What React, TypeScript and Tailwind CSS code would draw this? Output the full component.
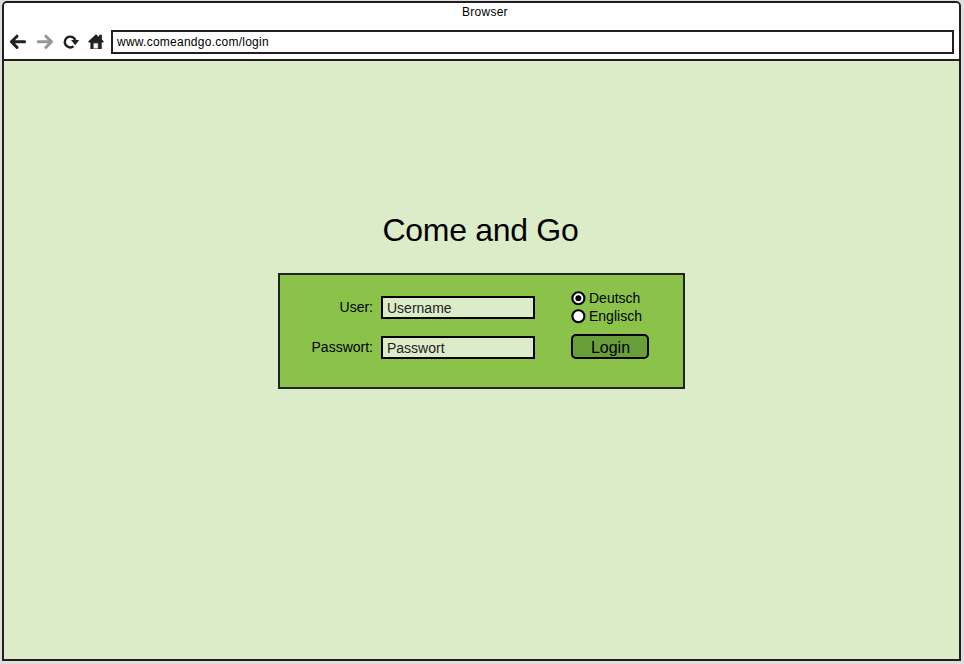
import React, { useState } from "react";

const toolbarIcons = (
  <svg width="100" height="20" viewBox="0 0 100 20" className="block shrink-0" fill="none">
    <path d="M20.6 9.8H8.2M13 4.2L7.4 9.8l5.6 5.6" stroke="#231f20" strokeWidth="3" strokeLinecap="round" strokeLinejoin="round" />
    <path d="M34.3 9.8h12.4M41.9 4.2l5.6 5.6-5.6 5.6" stroke="#979797" strokeWidth="3" strokeLinecap="round" strokeLinejoin="round" />
    <path d="M69.5 14.3A5.4 5.4 0 1 1 71.5 8.9" stroke="#231f20" strokeWidth="2.4" />
    <path d="M67 7.9h8.2l-4 5.3z" fill="#231f20" />
    <path
      d="M92 2.2l3.1 2.8V2.7h2.8v4.7l1.7 1.9v1.2h-1.9v6.4H86.4v-6.4h-2V9.3z"
      fill="#231f20"
    />
    <path d="M89.6 11.2h4.4v5.2h-4.4z" stroke="#85878a" strokeWidth=".8" fill="#fff" />
  </svg>
);

function Radio({ label, checked, onSelect }: { label: string; checked: boolean; onSelect: () => void }) {
  return (
    <button type="button" role="radio" aria-checked={checked} onClick={onSelect} className="flex h-[18px] items-center">
      <svg width="15" height="15" viewBox="0 0 15 15" className="mr-[3px] block shrink-0">
        <circle cx="7.4" cy="7.2" r="6" fill="#fff" stroke="#000" strokeWidth="2.1" />
        {checked && <circle cx="7.4" cy="7.2" r="3" fill="#000" />}
      </svg>
      <span className="whitespace-nowrap text-[14px] leading-[18px]">{label}</span>
    </button>
  );
}

function Field({ label, value }: { label: string; value: string }) {
  return (
    <div className="flex h-[23px]">
      <label className="mr-[8px] w-[93px] text-right text-[14px] leading-[23px]">{label}</label>
      <div className="w-[154px] border-2 border-black bg-[#ddecc8] pl-[4px] text-[14px] leading-[21px] text-[#222]">
        {value}
      </div>
    </div>
  );
}

export default function App() {
  const [language, setLanguage] = useState("Deutsch");
  return (
    <div className="h-[664px] w-[964px] overflow-hidden bg-[#dedede] pl-[2px] pt-px font-['Liberation_Sans',Arial,sans-serif] text-black">
      <div className="flex h-[660px] w-[959px] flex-col overflow-hidden rounded-t-[5px] border-2 border-[#231f20] bg-[#ddecc8]">
        <header className="flex h-[58px] shrink-0 flex-col border-b-2 border-[#231f20] bg-white">
          <div className="h-[27px] pl-[7px] text-center text-[12px] leading-[18px] tracking-[0.25px]">Browser</div>
          <div className="flex h-[24px] items-center">
            {toolbarIcons}
            <div className="ml-[7px] h-[24px] w-[843px] border-2 border-[#231f20] pl-[4px] text-[12px] leading-[20px] tracking-[0.25px]">
              www.comeandgo.com/login
            </div>
          </div>
        </header>
        <main className="flex flex-col pl-[274px] pt-[147px]">
          <h1 className="w-[407px] pr-[2px] text-center text-[32px] leading-[44px] tracking-[-0.3px]">Come and Go</h1>
          <form className="mt-[21px] flex h-[116px] w-[407px] border-2 border-[#222] bg-[#8bc34a] pt-[14px]">
            <div className="flex flex-col gap-[17px] pt-[7px]">
              <Field label="User:" value="Username" />
              <Field label="Passwort:" value="Passwort" />
            </div>
            <div className="ml-[36px]">
              <div role="radiogroup" className="flex flex-col">
                {["Deutsch", "Englisch"].map((name) => (
                  <Radio key={name} label={name} checked={language === name} onSelect={() => setLanguage(name)} />
                ))}
              </div>
              <button
                type="button"
                className="mt-[9px] block h-[25px] w-[78px] rounded-[5px] border-2 border-black bg-[#689f38] pl-px text-[16px] leading-[23px]"
              >
                Login
              </button>
            </div>
          </form>
        </main>
      </div>
    </div>
  );
}
